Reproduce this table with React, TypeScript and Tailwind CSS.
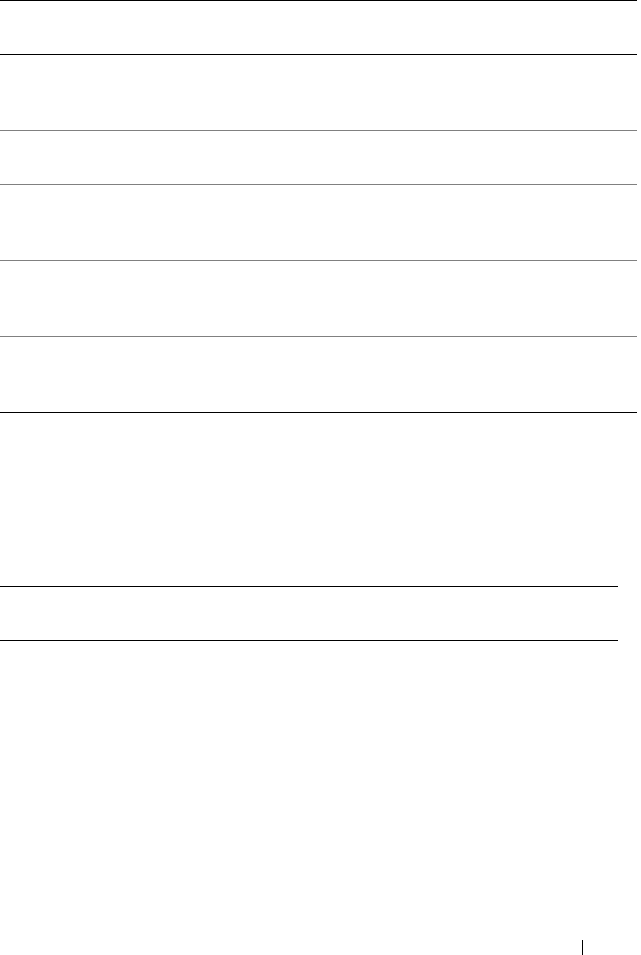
export default function App() {
  return (
    <div className="w-[641px] h-[955px] bg-white overflow-hidden" style={{ fontFamily: '"Liberation Sans", Arial, sans-serif' }}>
      <div className="w-[637px] flex flex-col">
        <div className="h-[54px] border-t border-black" />
        <div className="h-[76px] border-t border-black" />
        <div className="h-[54px] border-t border-[#808080]" />
        <div className="h-[76px] border-t border-[#808080]" />
        <div className="h-[76px] border-t border-[#808080]" />
        <div className="h-[77px] border-t border-[#808080] border-b border-b-black" />
      </div>
      <div className="mt-[173px] w-[618px] h-[55px] border-t border-b border-black" />
      <div className="mt-[299px] ml-[582px] w-px h-[15px] bg-black" />
    </div>
  );
}
